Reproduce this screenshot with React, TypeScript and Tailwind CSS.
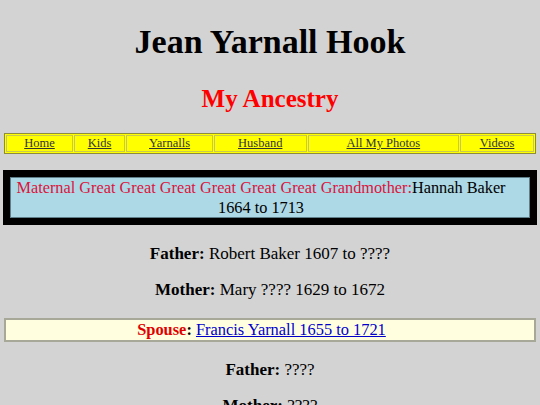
const navLinks = [
  { label: "Home", w: "w-[68px]" },
  { label: "Kids", w: "w-[52px]" },
  { label: "Yarnalls", w: "w-[88px]" },
  { label: "Husband", w: "w-[94px]" },
  { label: "All My Photos", w: "w-[155px]" },
  { label: "Videos", w: "w-[75px]" },
]

function Parent({ role, name, className = "" }: { role: string; name: string; className?: string }) {
  return (
    <p className={`text-center text-[17px] leading-[19.5px] ${className}`}>
      <b>{role}:</b> {name}
    </p>
  )
}

export default function App() {
  return (
    <div className="min-h-[405px] bg-[#d3d3d3] px-1 pt-[22px] font-['Liberation_Serif',serif] text-black">
      <h1 className="text-center text-[34px] font-bold leading-[39px]">Jean Yarnall Hook</h1>
      <h2 className="mt-[23px] text-center text-[25px] font-bold leading-[29px] text-[#ff0000]">My Ancestry</h2>

      <table className="mt-[20px] w-full border-separate border-spacing-[1px] border border-[#8c8c3c] bg-[#ffff00] text-[12.5px]">
        <tbody>
          <tr>
            {navLinks.map((l) => (
              <td key={l.label} className={`${l.w} border border-[#c8c850] p-0 text-center leading-[15px]`}>
                <a href="#" className="text-[#333333] underline">
                  {l.label}
                </a>
              </td>
            ))}
          </tr>
        </tbody>
      </table>

      <div className="mx-[-1px] mt-4 border-[7px] border-black">
        <div className="border border-[#5f7f8a] bg-[#add8e6] pr-[18px] pl-0 text-center text-[16.3px] leading-[19.5px]">
          <span className="text-[#dc143c]">Maternal Great Great Great Great Great Great Grandmother:</span>
          Hannah Baker 1664 to 1713
        </div>
      </div>

      <Parent role="Father" name="Robert Baker 1607 to ????" className="mt-[19px]" />
      <Parent role="Mother" name="Mary ???? 1629 to 1672" className="mt-[16.5px]" />

      <div className="mt-[18px] border-2 border-[#a8a898] bg-[#ffffe0] pr-[17px] text-center text-[16.4px] leading-[20px]">
        <b className="text-[#e00000]">Spouse</b>
        <b>:</b>{" "}
        <a href="#" className="text-[#0000cc] underline">
          Francis Yarnall 1655 to 1721
        </a>
      </div>

      <Parent role="Father" name="????" className="mt-[18px]" />
      <Parent role="Mother" name="????" className="mt-[16.5px]" />
    </div>
  )
}
